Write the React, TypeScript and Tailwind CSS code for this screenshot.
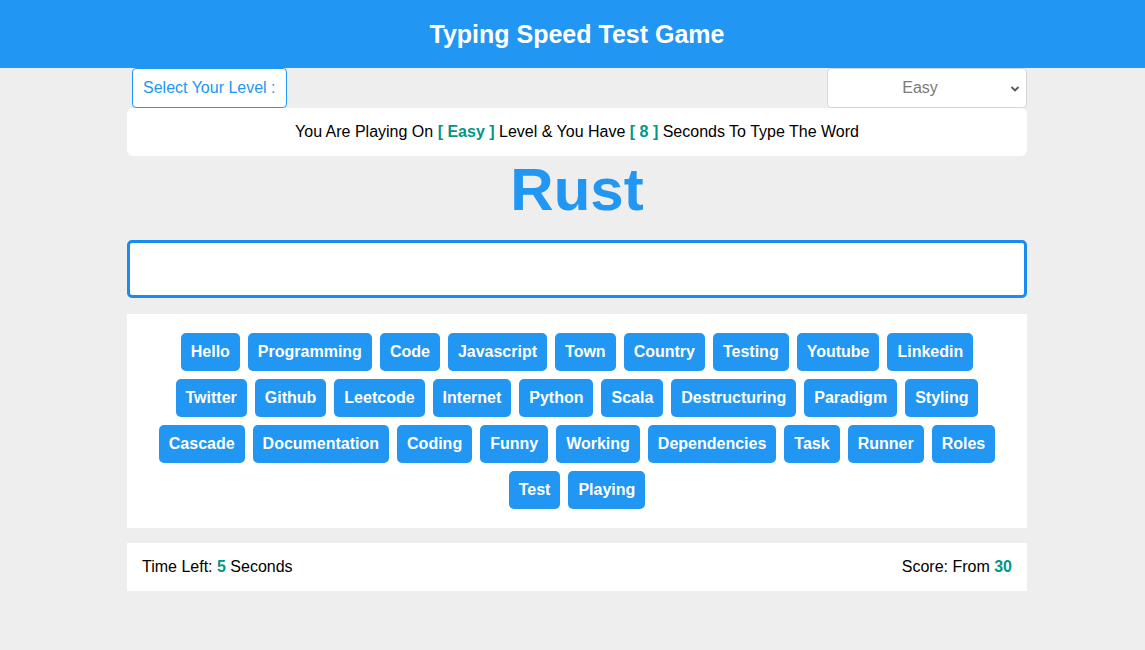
import React from "react";

const rows = [
  "Hello","Programming","Code","Javascript","Town","Country","Testing","Youtube","Linkedin",
  "Twitter","Github","Leetcode","Internet","Python","Scala","Destructuring","Paradigm","Styling",
  "Cascade","Documentation","Coding","Funny","Working","Dependencies","Task","Runner","Roles",
  "Test","Playing",
];

export default function App() {
  return (
    <div className="min-h-[650px] bg-[#eeeeee] text-black" style={{ fontFamily: '"Liberation Sans", Arial, sans-serif' }}>
      <header className="h-[68px] bg-[#2196f3] flex items-center justify-center pl-[9px]">
        <h1 className="text-white font-bold text-[25px] leading-[28px]">Typing Speed Test Game</h1>
      </header>
      <div className="pl-[9px]">
        <div className="mx-auto w-[900px]">
          <div className="flex justify-between items-start">
            <div className="ml-[5px] h-[40px] border border-[#2196f3] rounded-[4px] px-[10px] flex items-center text-[#2196f3] text-[16px] bg-white">
              Select Your Level :
            </div>
            <div className="w-[200px] h-[40px] border border-[#d6d6d6] rounded-[4px] bg-white flex items-center relative">
              <span className="flex-1 text-center text-[#7a7a7a] text-[16px] pr-[14px]">Easy</span>
              <svg className="absolute right-[6px] top-[16px]" width="10" height="8" viewBox="0 0 10 8">
                <path d="M1.5 2 L5 5.5 L8.5 2" stroke="#555" strokeWidth="1.8" fill="none" />
              </svg>
            </div>
          </div>
          <div className="h-[48px] bg-white rounded-[6px] flex items-center justify-center text-[16px]">
            <span>
              You Are Playing On <b className="text-[#009688]">[ Easy ]</b> Level &amp; You Have{" "}
              <b className="text-[#009688]">[ 8 ]</b> Seconds To Type The Word
            </span>
          </div>
          <div className="mt-[4px] mb-[20px] h-[60px] leading-[60px] text-center text-[60px] font-bold text-[#2196f3]">
            Rust
          </div>
          <div className="h-[58px] border-[3px] border-[#1a8cf0] rounded-[5px] bg-white" />
          <div className="mt-[16px] bg-white px-[19px] py-[19px] flex flex-wrap justify-center gap-[8px]">
            {rows.map((w) => (
              <span
                key={w}
                className="bg-[#2196f3] text-white font-bold text-[16px] leading-[18px] px-[10px] py-[10px] rounded-[5px]"
              >
                {w}
              </span>
            ))}
          </div>
          <div className="mt-[15px] h-[48px] bg-white px-[15px] flex items-center justify-between text-[16px]">
            <span>
              Time Left: <b className="text-[#009688]">5</b> Seconds
            </span>
            <span>
              Score: From <b className="text-[#009688]">30</b>
            </span>
          </div>
        </div>
      </div>
    </div>
  );
}
